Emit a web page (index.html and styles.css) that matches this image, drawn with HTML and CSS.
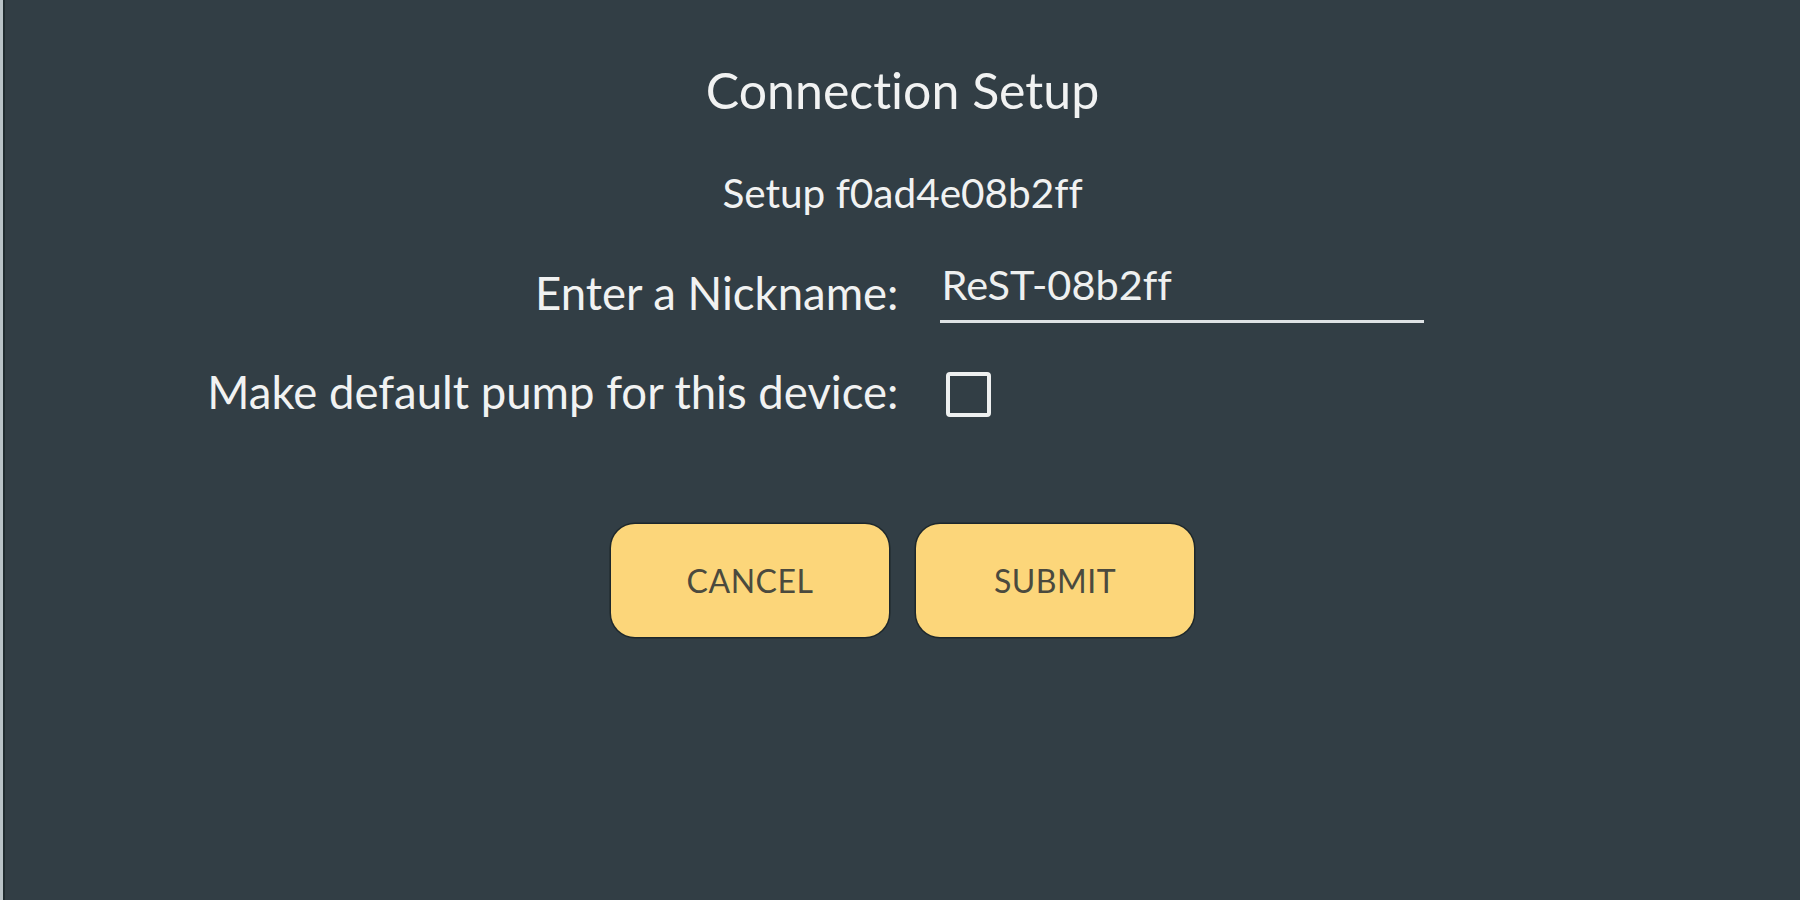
FILE: index.html
```html
<!DOCTYPE html>
<html lang="en">
<head>
<meta charset="utf-8">
<title>Connection Setup</title>
<link rel="stylesheet" href="styles.css">
</head>
<body>
  <div class="edge-light"></div>
  <div class="edge-dark"></div>
  <main class="screen">
    <h1 class="title">Connection Setup</h1>
    <p class="subtitle">Setup f0ad4e08b2ff</p>
    <form class="form">
      <label class="label label-nick" for="nick">Enter a Nickname:</label>
      <div class="control">
        <input id="nick" class="text-input" type="text" value="ReST-08b2ff">
      </div>
      <label class="label label-default" for="def">Make default pump for this device:</label>
      <div class="control">
        <input id="def" class="check" type="checkbox">
      </div>
    </form>
    <div class="actions">
      <button class="btn" type="button">CANCEL</button>
      <button class="btn" type="button">SUBMIT</button>
    </div>
  </main>
</body>
</html>
```

FILE: styles.css
```css
html, body {
  margin: 0;
  padding: 0;
  height: 100%;
}

body {
  display: flex;
  background: #323e45;
  font-family: Lato, "Open Sans", sans-serif;
  font-variant-ligatures: none;
  color: #f1f2f2;
  overflow: hidden;
}

.edge-light {
  width: 3px;
  background: #b9c3c7;
  flex: none;
}

.edge-dark {
  width: 2px;
  background: #1f2b2f;
  flex: none;
}

.screen {
  flex: 1;
  display: flex;
  flex-direction: column;
  align-items: center;
  padding-top: 60px;
}

.title {
  margin: 0;
  font-size: 50px;
  line-height: 60px;
  font-weight: 400;
}

.subtitle {
  margin: 49px 0 0;
  font-size: 40.5px;
  line-height: 48px;
}

.form {
  align-self: stretch;
  display: grid;
  grid-template-columns: 1fr 1fr;
  row-gap: 41px;
  margin-top: 48px;
}

.label {
  font-size: 45.5px;
  line-height: 56px;
  text-align: right;
  padding-right: 4px;
}

.control {
  padding-left: 37px;
  display: flex;
  align-items: flex-start;
}

.text-input {
  box-sizing: border-box;
  width: 484px;
  height: 60px;
  margin: -2px 0 0;
  padding: 0 0 16px 2px;
  border: none;
  border-bottom: 3px solid #dfe3e5;
  background: transparent;
  color: #eef0f0;
  font-family: inherit;
  font-variant-ligatures: none;
  font-size: 41.5px;
  outline: none;
}

.check {
  appearance: none;
  -webkit-appearance: none;
  box-sizing: border-box;
  width: 45px;
  height: 45px;
  margin: 8px 0 0 6px;
  border: 4px solid #eef0f0;
  border-radius: 4px;
  background: transparent;
}

.actions {
  display: flex;
  gap: 27px;
  margin-top: 104px;
}

.btn {
  width: 278px;
  height: 113px;
  border: none;
  border-radius: 24px;
  background: #fcd67a;
  box-shadow: 0 0 0 1.5px #1d272b;
  color: #4b4a3e;
  font-family: inherit;
  font-size: 32px;
  letter-spacing: 0.5px;
  padding: 0;
}
```
